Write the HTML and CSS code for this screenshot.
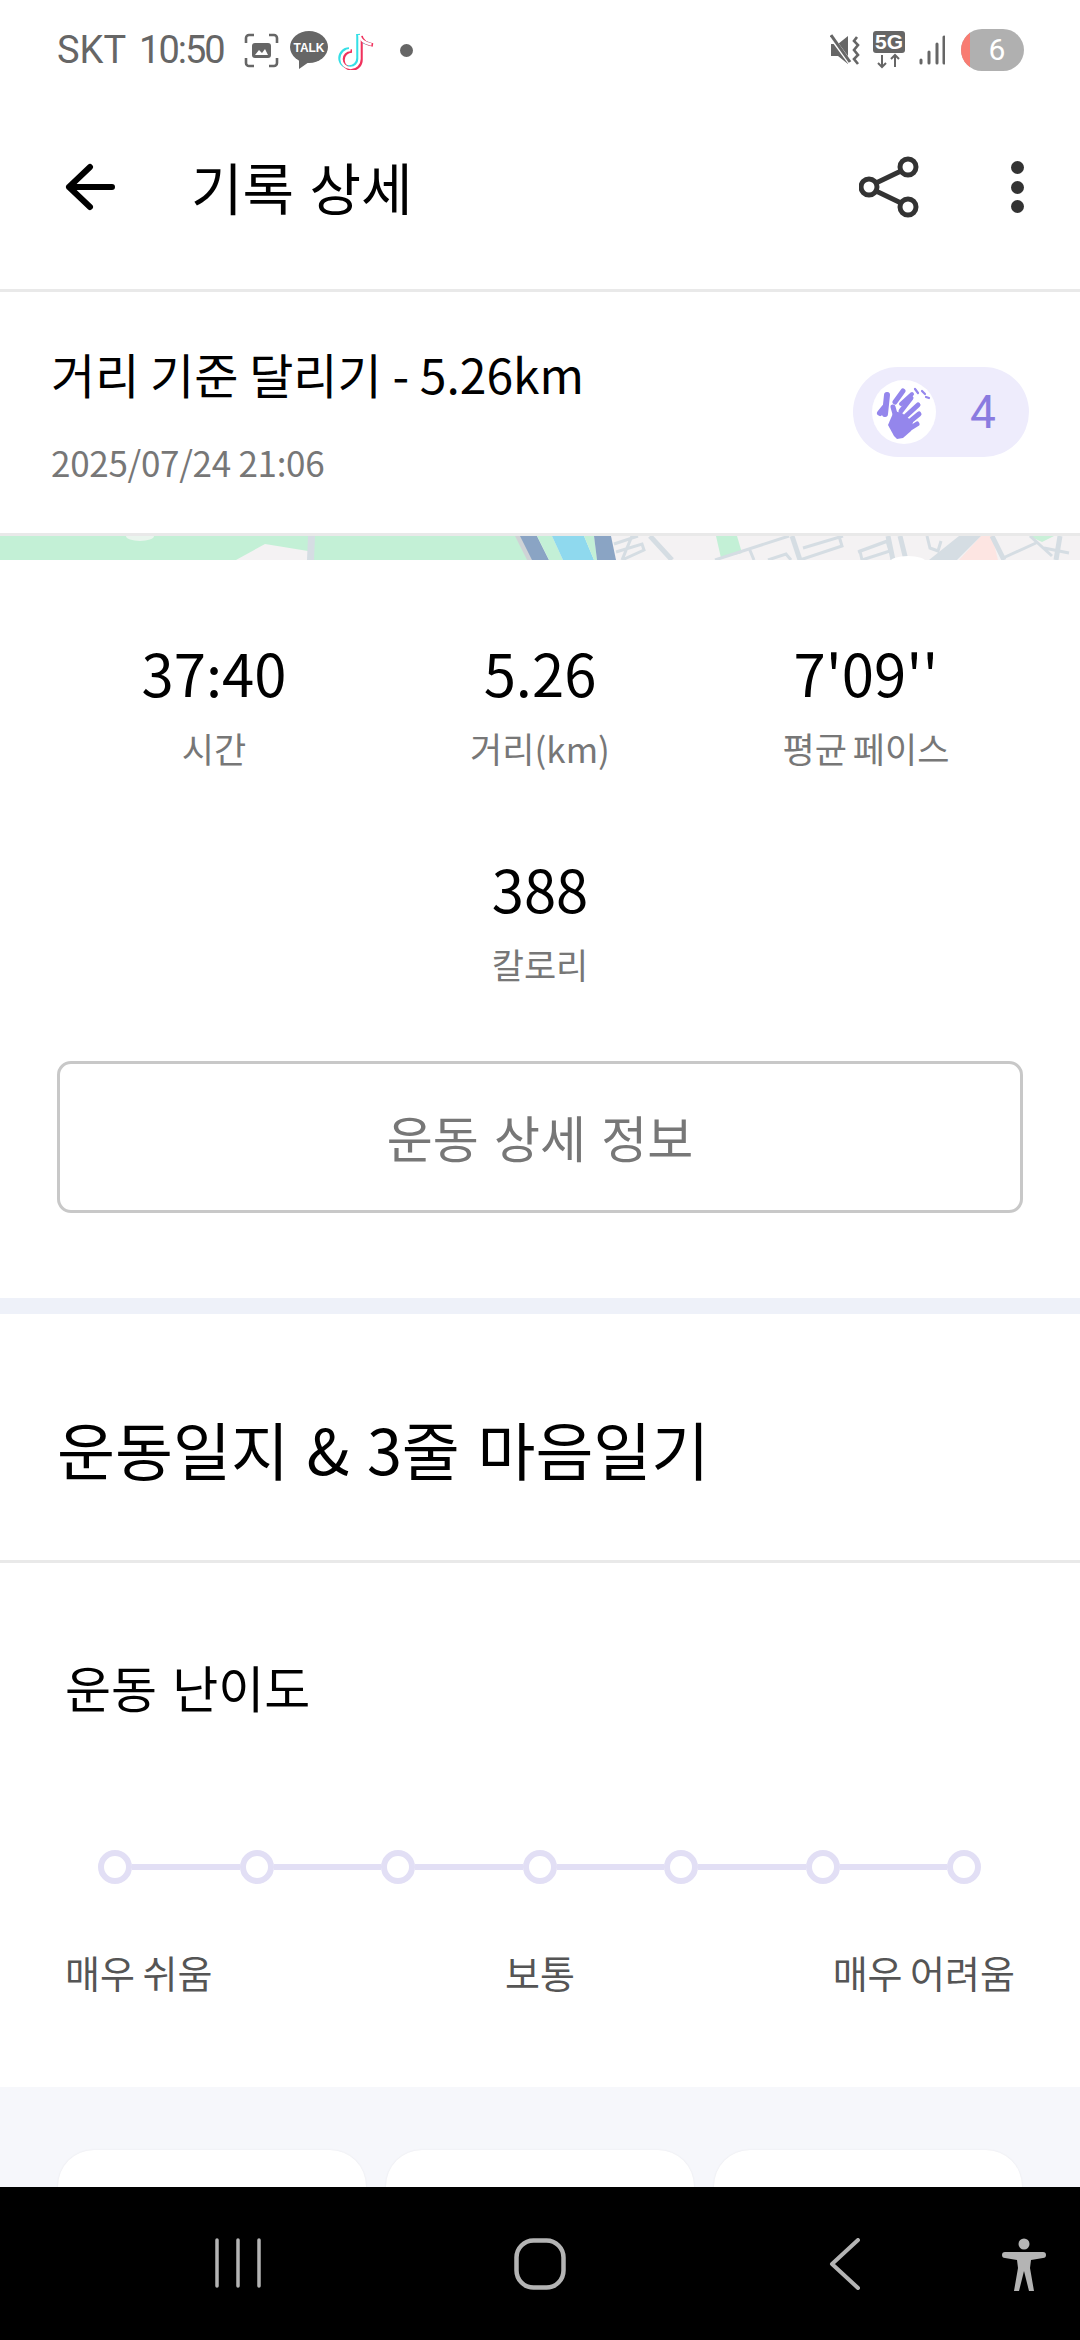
FILE: index.html
```html
<!DOCTYPE html>
<html lang="ko">
<head>
  <meta charset="utf-8">
  <title>기록 상세</title>
  <link rel="stylesheet" href="styles.css">
</head>
<body>
  <div class="screen">
    <div class="content">

      <div class="statusbar">
        <span class="carrier">SKT</span>
        <span class="clock">10:50</span>
        <svg class="st-shot" viewBox="0 0 35 35">
          <path d="M2 10V5a3 3 0 0 1 3-3h5M25 2h5a3 3 0 0 1 3 3v5M33 25v5a3 3 0 0 1-3 3h-5M10 33H5a3 3 0 0 1-3-3v-5" fill="none" stroke="#666" stroke-width="2.6"/>
          <rect x="8" y="10" width="19" height="15" rx="3" fill="#666"/>
          <path d="M11 22l4-5 3 3 3-4 3 6z" fill="#fff"/>
        </svg>
        <svg class="st-talk" viewBox="0 0 38 38">
          <ellipse cx="19" cy="16" rx="19" ry="16" fill="#666"/>
          <path d="M9 28l0 10 10-7z" fill="#666"/>
          <text x="19" y="21" class="talk-txt" text-anchor="middle">TALK</text>
        </svg>
        <svg class="st-tiktok" viewBox="0 0 36 39">
          <g fill="none" stroke-width="3.500">
            <path d="M20 3V27a9 9 0 1 1-9-9" stroke="#35dfe6"/>
            <path d="M20 3c1 6 6 9 12 10" stroke="#35dfe6"/>
            <path d="M23 5V29a9 9 0 1 1-9-9" stroke="#f0315c"/>
            <path d="M23 5c1 6 6 8 12 9" stroke="#f0315c"/>
            <path d="M21.500 4V28a9 9 0 1 1-9-9" stroke="#fff" stroke-width="2.400"/>
            <path d="M21.500 4c1 6 6 8.500 12 9.500" stroke="#fff" stroke-width="2.400"/>
          </g>
        </svg>
        <span class="st-dot"></span>
        <span class="st-spacer"></span>
        <svg class="st-mute" viewBox="0 0 30 32">
          <path d="M1 10h7l10-8v28l-10-8H1z" fill="#666"/>
          <path d="M2 4l19 26" stroke="#fff" stroke-width="4.500"/>
          <path d="M1 1l19 27" stroke="#666" stroke-width="3"/>
          <path d="M27 3l-3 4 4 4-4 5 4 5-4 4 4 5" fill="none" stroke="#666" stroke-width="2.600"/>
        </svg>
        <svg class="st-5g" viewBox="0 0 32 38">
          <rect x="0" y="0" width="32" height="22" rx="3" fill="#666"/>
          <text x="16" y="18" class="fiveg-txt" text-anchor="middle">5G</text>
          <path d="M9 24v12M5 32l4 4 4-4M22 36V24M18 28l4-4 4 4" fill="none" stroke="#666" stroke-width="2"/>
        </svg>
        <svg class="st-signal" viewBox="0 0 26 30">
          <g stroke="#666" stroke-width="3" stroke-linecap="round">
            <path d="M2 28v-3M10 28V17M18 28V9M25 28V2"/>
          </g>
        </svg>
        <div class="battery"><span class="battery-low"></span><span class="battery-num">6</span></div>
      </div>

      <div class="appbar">
        <svg class="ic-back" viewBox="0 0 50 48">
          <path d="M47 24H4M25 4L4 24l21 20" fill="none" stroke="#000" stroke-width="6" stroke-linecap="round" stroke-linejoin="round"/>
        </svg>
        <h1 class="appbar-title">기록 상세</h1>
        <svg class="ic-share" viewBox="0 0 60 62">
          <g fill="none" stroke="#333" stroke-width="5">
            <circle cx="49" cy="11" r="8"/>
            <circle cx="49" cy="51" r="8"/>
            <circle cx="10" cy="31" r="8"/>
            <path d="M17 27l25-12M17 35l25 12"/>
          </g>
        </svg>
        <div class="ic-more"><i></i><i></i><i></i></div>
      </div>

      <div class="summary">
        <div class="summary-text">
          <div class="summary-title">거리 기준 달리기 - 5.26km</div>
          <div class="summary-date">2025/07/24 21:06</div>
        </div>
        <div class="clap">
          <span class="clap-icon">
            <svg viewBox="0 0 64 64">
              <g stroke="#9486ec" stroke-linecap="round" fill="none">
                <path d="M15 15l-2 19M12 28l-4 5" stroke-width="6"/>
                <path d="M23 22l8-11" stroke-width="5"/>
                <path d="M29 24l11-10" stroke-width="4"/>
                <path d="M43 9l3 4M50 11l3 3M54 17l3 1" stroke-width="2.200"/>
                <path d="M21 27l4 14M29 31l10-13M34 36l12-11M36 43l11-9M37 49l8-5" stroke-width="5"/>
              </g>
              <path d="M16 45l6-14 8 2 11 9-2 9-8 7-6 1-3-3z" fill="#9486ec"/>
            </svg>
          </span>
          <span class="clap-count">4</span>
        </div>
      </div>

      <svg class="map" viewBox="0 0 1080 24" preserveAspectRatio="none">
        <rect width="1080" height="24" fill="#f4f2f3"/>
        <path d="M0 0H520L533 24H0z" fill="#c3f0d6"/>
        <ellipse cx="140" cy="0" rx="14" ry="5" fill="#eaf5ee"/>
        <path d="M236 24L265 8l43 7v9z" fill="#f4f2f3"/>
        <path d="M308 0h7l-1 24h-7z" fill="#d5dde3"/>
        <path d="M515 0l6 0 12 24h-6z" fill="#cfd3d6"/>
        <path d="M520 0h17l12 24h-17z" fill="#8aa4c4"/>
        <path d="M537 0h15l11 24h-14z" fill="#c3f0d6"/>
        <path d="M552 0h32l10 24h-31z" fill="#8fd9ee"/>
        <path d="M584 0h10l3 24h-3z" fill="#c3f0d6"/>
        <path d="M594 0h17l5 24h-19z" fill="#8aa4c4"/>
        <path d="M716 0h21l5 17-21 5z" fill="#c3f0d6"/>
        <path d="M981 0h11l6 24h-39z" fill="#fde5e2"/>
        <path d="M1029 0h25l-12 6z" fill="#c9f0d8"/>
        <g fill="none" stroke="#d5dde3" stroke-width="3">
          <path d="M614 8l24-8M616 16l26-8 2 6-22 10M632 0l-10 24"/>
          <path d="M715 24l74-24M749 12l5 12M768 24l18-6 5 6"/>
          <path d="M803 12l40-12M800 24l42-14-3-10"/>
          <path d="M858 16l30-11M862 24l28-9-3-10-27 10z"/>
          <path d="M927 0l3 12 8 3 3-10M1030 0l22 20M1003 22l33-15M1044 12l25 5"/>
        </g>
        <g fill="none" stroke="#d5dde3" stroke-width="5">
          <path d="M650 0l22 24"/>
          <path d="M792 0l8 24"/>
          <path d="M888 0l5 24M900 0l6 24"/>
          <path d="M992 0l12 24M1060 0l-4 24"/>
        </g>
        <path d="M959 0h22l-24 24h-28z" fill="#d5dde3"/>
        <ellipse cx="908" cy="26" rx="18" ry="6" fill="#fff"/>
      </svg>

      <div class="stats">
        <div class="stat">
          <div class="stat-value">37:40</div>
          <div class="stat-label">시간</div>
        </div>
        <div class="stat">
          <div class="stat-value">5.26</div>
          <div class="stat-label">거리(km)</div>
        </div>
        <div class="stat">
          <div class="stat-value">7'09''</div>
          <div class="stat-label">평균 페이스</div>
        </div>
        <div class="stat stat-center">
          <div class="stat-value">388</div>
          <div class="stat-label">칼로리</div>
        </div>
      </div>

      <div class="btn-wrap">
        <div class="btn-detail">운동 상세 정보</div>
      </div>

      <div class="band"></div>

      <h2 class="journal-title">운동일지 &amp; 3줄 마음일기</h2>

      <div class="level">
        <div class="level-title">운동 난이도</div>
        <div class="slider">
          <span class="knob"></span><span class="seg"></span>
          <span class="knob"></span><span class="seg"></span>
          <span class="knob"></span><span class="seg"></span>
          <span class="knob"></span><span class="seg"></span>
          <span class="knob"></span><span class="seg"></span>
          <span class="knob"></span><span class="seg"></span>
          <span class="knob"></span>
        </div>
        <div class="slider-labels">
          <span>매우 쉬움</span>
          <span class="label-mid">보통</span>
          <span class="label-end">매우 어려움</span>
        </div>
      </div>

      <div class="cards">
        <div class="card"></div>
        <div class="card"></div>
        <div class="card"></div>
      </div>

    </div>

    <div class="navbar">
      <svg class="nav-recent" viewBox="0 0 48 50">
        <path d="M3 2v46M24 2v46M45 2v46" stroke="#b4b4b4" stroke-width="3.500" stroke-linecap="round"/>
      </svg>
      <svg class="nav-home" viewBox="0 0 52 52">
        <rect x="2.500" y="2.500" width="47" height="47" rx="17" fill="none" stroke="#b4b4b4" stroke-width="4.500"/>
      </svg>
      <svg class="nav-back" viewBox="0 0 32 52">
        <path d="M29 2L3 26l26 24" fill="none" stroke="#b4b4b4" stroke-width="4" stroke-linecap="round" stroke-linejoin="round"/>
      </svg>
      <svg class="nav-access" viewBox="0 0 44 54">
        <circle cx="22" cy="6" r="5.500" fill="#b4b4b4"/>
        <path d="M3 14h38a2.800 2.800 0 0 1 0 6l-12 2-1 8 4 23h-5l-5-20-5 20h-5l4-23-1-8-12-2a2.800 2.800 0 0 1 0-6z" fill="#b4b4b4"/>
      </svg>
    </div>
  </div>
</body>
</html>
```

FILE: styles.css
```css
* {box-sizing: border-box;}
html, body {margin: 0; padding: 0;}
body {background-color: #fff;}

.screen {
  width: 1080px;
  height: 2340px;
  display: flex;
  flex-direction: column;
  overflow: hidden;
  font-family: "Noto Sans CJK KR", "Noto Sans", sans-serif;
  font-feature-settings: "calt" 0, "locl" 0, "liga" 0;
  color: #000;
}
.content {flex: 1; min-height: 0; overflow: hidden; background-color: #fff;}

/* status bar */
.statusbar {
  height: 100px;
  display: flex;
  align-items: center;
  padding: 0 56px 0 57px;
  font-family: Roboto, sans-serif;
  font-size: 38px;
  color: #666;
}
.clock {margin-left: 13px; letter-spacing: -2px;}
.st-shot {width: 35px; height: 35px; margin-left: 20px;}
.st-talk {width: 38px; height: 38px; margin-left: 11px;}
.talk-txt {font: bold 12px "Liberation Sans", sans-serif; fill: #fff;}
.st-tiktok {width: 36px; height: 39px; margin-left: 10px;}
.st-dot {width: 13px; height: 13px; border-radius: 50%; background-color: #666; margin-left: 26px;}
.st-spacer {flex: 1;}
.st-mute {width: 30px; height: 32px;}
.st-5g {width: 32px; height: 38px; margin-left: 13px;}
.fiveg-txt {font: bold 21px "Liberation Sans", sans-serif; fill: #fff;}
.st-signal {width: 26px; height: 30px; margin-left: 14px;}
.battery {
  width: 63px;
  height: 42px;
  margin-left: 16px;
  border-radius: 21px;
  overflow: hidden;
  background-color: #b0b0b0;
  display: flex;
}
.battery-low {width: 9px; background-color: #f87c72;}
.battery-num {flex: 1; text-align: center; color: #fff; font-size: 30px; line-height: 42px; font-weight: 400;}

/* app bar */
.appbar {
  height: 192px;
  display: flex;
  align-items: center;
  padding: 0 56px 15px 65px;
  border-bottom: 3px solid #e9e9e9;
}
.ic-back {width: 50px; height: 48px;}
.appbar-title {
  flex: 1;
  margin: -3px 0 0 76px;
  font-size: 56px;
  font-weight: 400;
  line-height: 70px;
  word-spacing: 3px;
}
.ic-share {width: 60px; height: 62px; margin-right: 92px;}
.ic-more {display: flex; flex-direction: column; gap: 6.500px; width: 13px;}
.ic-more i {display: block; width: 13px; height: 13px; border-radius: 50%; background-color: #333;}

/* run summary */
.summary {
  height: 244px;
  display: flex;
  align-items: center;
  justify-content: space-between;
  padding: 0 51px 0 51px;
  border-bottom: 3px solid #e9e9e9;
}
.summary-text {margin-top: 3px;}
.summary-title {font-size: 48px; line-height: 64px;}
.summary-date {font-size: 35px; line-height: 50px; margin-top: 32px; color: #777; letter-spacing: -0.300px;}
.clap {
  width: 176px;
  height: 90px;
  border-radius: 45px;
  background-color: #eeecfc;
  display: flex;
  align-items: center;
  padding-left: 19px;
  margin-top: -1px;
}
.clap-icon {width: 64px; height: 64px; border-radius: 50%; background-color: #fff; display: block;}
.clap-icon svg {width: 64px; height: 64px; display: block;}
.clap-count {margin-left: 34px; font: 46px Roboto, sans-serif; color: #8a7be0;}

/* map strip */
.map {display: block; width: 1080px; height: 24px;}

/* numbers */
.stats {
  display: grid;
  grid-template-columns: repeat(3, 326px);
  row-gap: 74px;
  padding: 71px 0 0 51px;
}
.stat {text-align: center;}
.stat-center {grid-column: 2;}
.stat-value {font-size: 58px; line-height: 82px;}
.stat-label {font-size: 35px; line-height: 50px; margin-top: 10px; color: #777; word-spacing: -2px;}

.btn-wrap {padding: 72px 57px 0;}
.btn-detail {
  height: 152px;
  border: 3px solid #c8c8c8;
  border-radius: 14px;
  display: flex;
  align-items: center;
  justify-content: center;
  padding-bottom: 2px;
  font-size: 50px;
  color: #777;
  word-spacing: 4px;
}

.band {height: 16px; margin-top: 85px; background-color: #eef1f9;}

.journal-title {
  margin: 0;
  height: 249px;
  padding: 20px 57px 0;
  display: flex;
  align-items: center;
  font-size: 63px;
  font-weight: 400;
  word-spacing: 3.500px;
  border-bottom: 3px solid #e9e9e9;
}

/* difficulty */
.level {height: 524px; padding: 88px 65px 0;}
.level-title {font-size: 50px; line-height: 70px; word-spacing: 4px;}
.slider {
  display: flex;
  align-items: center;
  margin: 129px 0 0 33px;
  width: 883px;
}
.knob {
  width: 34px;
  height: 34px;
  flex: none;
  border: 6px solid #e2dff5;
  border-radius: 50%;
  background-color: #fff;
}
.seg {flex: 1; height: 6px; background-color: #e2dff5;}
.slider-labels {
  display: grid;
  grid-template-columns: 1fr 1fr 1fr;
  margin-top: 60px;
  font-size: 38px;
  line-height: 56px;
  color: #555;
  word-spacing: -1px;
}
.label-mid {text-align: center;}
.label-end {text-align: right;}

/* cards under the slider */
.cards {
  height: 200px;
  background-color: #f6f7fb;
  padding: 63px 58px 0;
  display: grid;
  grid-template-columns: repeat(3, 308px);
  column-gap: 20px;
}
.card {height: 200px; background-color: #fff; border-radius: 36px 36px 0 0; box-shadow: 0 0 2px #e6e6ea;}

/* android nav */
.navbar {
  height: 153px;
  flex: none;
  background-color: #000;
  display: flex;
  align-items: flex-start;
  padding: 51px 0 0 214px;
}
.nav-recent {width: 48px; height: 50px;}
.nav-home {width: 52px; height: 52px; margin-left: 252px;}
.nav-back {width: 32px; height: 52px; margin-left: 263px;}
.nav-access {width: 44px; height: 54px; margin-left: 141px;}
```
